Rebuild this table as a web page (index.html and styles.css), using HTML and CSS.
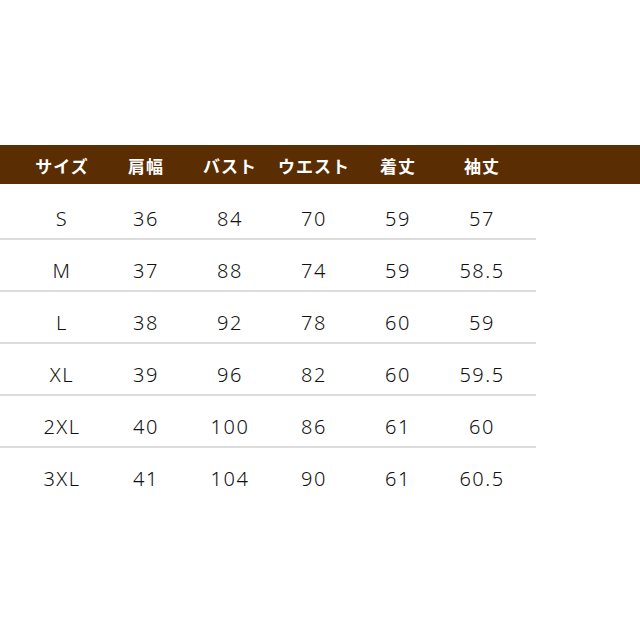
FILE: index.html
```html
<!DOCTYPE html>
<html lang="ja">
<head>
<meta charset="utf-8">
<link rel="stylesheet" href="styles.css">
</head>
<body>
<div class="page">
  <div class="head">
    <div class="cell">サイズ</div>
    <div class="cell">肩幅</div>
    <div class="cell">バスト</div>
    <div class="cell">ウエスト</div>
    <div class="cell">着丈</div>
    <div class="cell">袖丈</div>
  </div>
  <div class="rows">
    <div class="row"><div class="cell">S</div><div class="cell">36</div><div class="cell">84</div><div class="cell">70</div><div class="cell">59</div><div class="cell">57</div></div>
    <div class="row"><div class="cell">M</div><div class="cell">37</div><div class="cell">88</div><div class="cell">74</div><div class="cell">59</div><div class="cell">58.5</div></div>
    <div class="row"><div class="cell">L</div><div class="cell">38</div><div class="cell">92</div><div class="cell">78</div><div class="cell">60</div><div class="cell">59</div></div>
    <div class="row"><div class="cell">XL</div><div class="cell">39</div><div class="cell">96</div><div class="cell">82</div><div class="cell">60</div><div class="cell">59.5</div></div>
    <div class="row"><div class="cell">2XL</div><div class="cell">40</div><div class="cell">100</div><div class="cell">86</div><div class="cell">61</div><div class="cell">60</div></div>
    <div class="row"><div class="cell">3XL</div><div class="cell">41</div><div class="cell">104</div><div class="cell">90</div><div class="cell">61</div><div class="cell">60.5</div></div>
  </div>
</div>
</body>
</html>
```
FILE: styles.css
```css
html, body {
  margin: 0;
  padding: 0;
  background: #ffffff;
}
.page {
  padding-top: 145px;
  width: 640px;
}
.head {
  display: grid;
  grid-template-columns: repeat(6, 84px);
  padding-left: 20px;
  height: 39px;
  align-items: center;
  background: #5a2d03;
  color: #ffffff;
  font-family: "Noto Sans CJK JP", sans-serif;
  font-weight: 700;
  font-size: 17px;
  letter-spacing: 1px;
}
.head .cell {
  text-align: center;
  padding-top: 2px;
}
.rows {
  margin-top: 4px;
  width: 536px;
}
.row {
  display: grid;
  grid-template-columns: repeat(6, 84px);
  padding-left: 20px;
  height: 50px;
  align-items: center;
  border-bottom: 2px solid #dcdcdc;
  font-family: "Noto Sans", sans-serif;
  font-weight: 300;
  font-size: 20px;
  letter-spacing: 1.5px;
  color: #111111;
}
.row:last-child {
  border-bottom: none;
}
.row .cell {
  text-align: center;
  padding-top: 10px;
}
```
